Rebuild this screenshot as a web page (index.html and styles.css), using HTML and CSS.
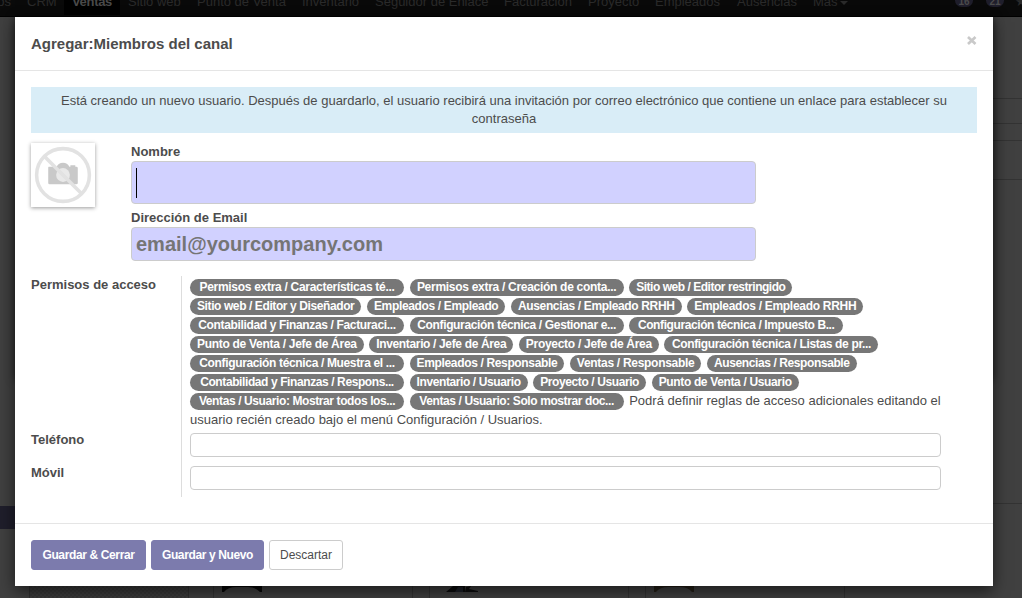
FILE: index.html
```html
<!DOCTYPE html>
<html lang="es">
<head>
<meta charset="utf-8">
<title>Agregar: Miembros del canal</title>
<link rel="stylesheet" href="styles.css">
</head>
<body>
<div class="page">
  <nav class="navbar">
    <span class="nav-item cut">Contactos</span><span class="nav-item crm">CRM</span><span class="nav-item active">Ventas</span><span class="nav-item web">Sitio web</span><span class="nav-item pos">Punto de Venta</span><span class="nav-item inv">Inventario</span><span class="nav-item seg">Seguidor de Enlace</span><span class="nav-item fac">Facturación</span><span class="nav-item pro">Proyecto</span><span class="nav-item emp">Empleados</span><span class="nav-item aus">Ausencias</span><span class="nav-item mas">Más<i class="caret"></i></span>
    <span class="badge one">16</span><span class="badge two">21</span><span class="star">★</span>
  </nav>
  <i class="side-selected"></i>
  <i class="rule r1"></i><i class="rule r2"></i><i class="rule r3"></i><i class="rule r4"></i><i class="rule r5"></i>
  <div class="kanban">
    <div class="search-panel"></div>
    <div class="card"><svg width="40" height="6" viewBox="0 0 40 6"><path d="M0 0H40V6H38Q34 1 26 1H14Q6 1 2 6H0Z" fill="#080808"/></svg></div>
    <div class="card"><svg width="40" height="6" viewBox="0 0 40 6"><path d="M8 6L15 0H27V6Z M27 6L28 1L33 0L31 3L40 5V6Z" fill="#0c0c0d"/><path d="M17 6L20 1H25V6Z" fill="#1d2028"/></svg></div>
    <div class="card"><svg width="40" height="6" viewBox="0 0 40 6"><path d="M0 0H40V6H38Q34 1 26 1H14Q6 1 2 6H0Z" fill="#252018"/></svg></div>
  </div>
</div>
<div class="shade"></div>
<section class="modal">
  <header class="modal-header">
    <h3>Agregar:Miembros del canal</h3>
    <svg class="close" width="11" height="11" viewBox="0 0 11 11"><path d="M2 2L9.500 9M9.500 2L2 9" stroke="#c9c9c9" stroke-width="2.700"/></svg>
  </header>
  <main class="modal-body">
    <p class="alert"><span class="line-a">Está creando un nuevo usuario. Después de guardarlo, el usuario recibirá una invitación por correo electrónico que contiene un enlace para establecer su</span><br><span>contraseña</span></p>
    <div class="identity">
      <div class="avatar">
        <svg width="64" height="64" viewBox="0 0 65 65">
          <path d="M18 24H26Q28 20 32.500 20Q37 20 39 24H40V22.500H45V24H46Q47.500 24 47.500 25.500V40.500Q47.500 42 46 42H19Q17.500 42 17.500 40.500V25.500Q17.500 24 18 24Z" fill="#c9c9c9"/>
          <circle cx="32.500" cy="32.500" r="7" fill="#e9e9e9"/>
          <circle cx="32.500" cy="32.500" r="26.800" fill="none" stroke="#e2e2e2" stroke-width="3.600"/>
          <path d="M13.500 13.500L51.500 51.500" stroke="#e2e2e2" stroke-width="3.600"/>
        </svg>
      </div>
      <div class="title-fields">
        <label>Nombre</label>
        <div class="big-input name"><i class="cursor"></i></div>
        <label class="second">Dirección de Email</label>
        <div class="big-input email"><span>email@yourcompany.com</span></div>
      </div>
    </div>
    <div class="group">
      <div class="labels"><label>Permisos de acceso</label><label class="tel">Teléfono</label><label class="mov">Móvil</label></div>
      <div class="fields">
        <div class="tags">
          <div class="tag-row"><span class="tag wide loose">Permisos extra / Características té...</span><span class="tag wide loose">Permisos extra / Creación de conta...</span><span class="tag tightest">Sitio web / Editor restringido</span></div>
          <div class="tag-row"><span class="tag tight">Sitio web / Editor y Diseñador</span><span class="tag">Empleados / Empleado</span><span class="tag">Ausencias / Empleado RRHH</span><span class="tag loose">Empleados / Empleado RRHH</span></div>
          <div class="tag-row"><span class="tag wide">Contabilidad y Finanzas / Facturaci...</span><span class="tag wide">Configuración técnica / Gestionar e...</span><span class="tag wide tight">Configuración técnica / Impuesto B...</span></div>
          <div class="tag-row"><span class="tag loose">Punto de Venta / Jefe de Área</span><span class="tag">Inventario / Jefe de Área</span><span class="tag loose">Proyecto / Jefe de Área</span><span class="tag wide">Configuración técnica / Listas de pr...</span></div>
          <div class="tag-row"><span class="tag wide">Configuración técnica / Muestra el ...</span><span class="tag">Empleados / Responsable</span><span class="tag loose">Ventas / Responsable</span><span class="tag tight">Ausencias / Responsable</span></div>
          <div class="tag-row"><span class="tag wide tight">Contabilidad y Finanzas / Respons...</span><span class="tag tight">Inventario / Usuario</span><span class="tag tight">Proyecto / Usuario</span><span class="tag">Punto de Venta / Usuario</span></div>
          <div class="tag-row"><span class="tag wide tight">Ventas / Usuario: Mostrar todos los...</span><span class="tag wide tight">Ventas / Usuario: Solo mostrar doc...</span><span class="note">Podrá definir reglas de acceso adicionales editando el</span></div>
          <div class="note last">usuario recién creado bajo el menú Configuración / Usuarios.</div>
        </div>
        <div class="input"></div>
        <div class="input"></div>
      </div>
    </div>
  </main>
  <footer class="modal-footer"><button class="btn primary save">Guardar &amp; Cerrar</button><button class="btn primary new">Guardar y Nuevo</button><button class="btn discard">Descartar</button></footer>
</section>
</body>
</html>
```
FILE: styles.css
```css
* { box-sizing: border-box; }
body { margin: 0; width: 1022px; height: 598px; overflow: hidden; background: #404040; color: #4c4c4c; font: 13px/18px "Liberation Sans", Arial, sans-serif; position: relative; }
.page { position: absolute; inset: 0; overflow: hidden; }
.navbar { height: 17px; background: #0a0a0a; border-bottom: 1px solid #000; color: #2b2b2b; position: relative; white-space: nowrap; }
.nav-item { position: absolute; top: -7px; }
.cut { right: 1011px; }
.crm { left: 27px; }
.active { left: 64px; width: 56px; height: 22px; background: #000; color: #4a4a4a; font-weight: bold; text-align: center; letter-spacing: -.3px; }
.web { left: 128px; }
.pos { left: 197px; }
.inv { left: 302px; }
.seg { left: 375px; }
.fac { left: 504px; }
.pro { left: 588px; }
.emp { left: 655px; }
.aus { left: 737px; }
.mas { left: 813px; }
.caret { display: inline-block; border: 4px solid transparent; border-top-color: #2b2b2b; border-bottom: 0; margin-left: 2px; vertical-align: 1px; }
.badge { position: absolute; top: -6px; height: 13px; width: 18px; border-radius: 7px; background: #1f1e2b; color: #4b4b4b; font: bold 10px/15px "Liberation Sans", sans-serif; text-align: center; }
.one { left: 955px; }
.two { left: 986px; }
.star { position: absolute; left: 1015px; top: -7px; }
.side-selected { position: absolute; left: 0; top: 506px; width: 20px; height: 23px; background: #1f1e2b; }
.rule { position: absolute; left: 980px; right: 0; height: 1px; background: #333; }
.r1 { top: 98px; }
.r2 { top: 123px; }
.r3 { top: 140px; }
.r4 { top: 179px; }
.r5 { top: 503px; }
.kanban { position: absolute; left: 29px; top: 580px; height: 18px; display: flex; }
.search-panel { width: 160px; border: solid #303030; border-width: 0 1px; margin-right: 24px; background: repeating-conic-gradient(#383838 0 25%, #3d3d3d 0 50%) 0 0 / 4px 4px; }
.card { width: 200px; margin-right: 16px; border: solid #333; border-width: 0 1px; padding: 6px 0 0 8px; line-height: 0; }
.shade { position: absolute; left: 15px; top: 17px; width: 978px; height: 363px; box-shadow: 0 0 8px rgba(0,0,0,.5); }
.modal { position: absolute; left: 15px; top: 17px; width: 978px; height: 569px; display: flex; flex-direction: column; background: #fff; box-shadow: 0 5px 15px rgba(0,0,0,.6); }
.modal-header { height: 54px; border-bottom: 1px solid #e5e5e5; padding: 0 16px; display: flex; justify-content: space-between; }
h3 { margin: 17px 0 0; font-size: 15px; line-height: 20px; }
.close { margin-top: 18px; }
.modal-body { flex: 1; padding: 16px; }
.alert { margin: 0; height: 46px; background: #d9edf7; text-align: center; padding-top: 5px; white-space: nowrap; }
label { display: block; font-weight: bold; }
.identity { display: flex; height: 143px; padding-top: 10px; }
.avatar { width: 64px; height: 64px; box-shadow: 0 1px 4px rgba(0,0,0,.4); margin-right: 36px; }
.title-fields label { height: 18px; }
.title-fields label.second { margin-top: 5px; }
.big-input { width: 625px; border: 1px solid #ccc; border-radius: 4px; background: #d1d1ff; padding-left: 4px; }
.name { height: 43px; padding-top: 6px; }
.cursor { display: block; width: 1px; height: 30px; background: #000; }
.email { height: 34px; font-size: 20px; font-weight: bold; line-height: 32px; color: #757575; }
.group { display: flex; height: 221px; }
.labels { width: 151px; border-right: 1px solid #ddd; }
.labels .tel { margin-top: 137px; }
.labels .mov { margin-top: 15px; }
.fields { width: 759px; padding: 2px 0 0 8px; }
.tags { height: 155px; }
.tag-row { display: flex; gap: 5.6px; height: 19px; white-space: nowrap; }
.tag { height: 17px; margin-top: 1px; padding: 0 7px; border-radius: 9px; background: #777; color: #fff; font-size: 12px; font-weight: bold; line-height: 16px; text-align: center; letter-spacing: -.35px; }
.wide { width: 214px; padding: 0; }
.loose { letter-spacing: -.29px; }
.tight { letter-spacing: -.4px; }
.tightest { letter-spacing: -.47px; }
.note { line-height: 17px; }
.input { height: 24px; border: 1px solid #ccc; border-radius: 4px; margin-bottom: 9px; }
.modal-footer { height: 63px; border-top: 1px solid #e5e5e5; padding: 16px; display: flex; gap: 5px; }
.btn { height: 30px; border: 1px solid #7c7bad; border-radius: 3px; padding: 0; font: 12px/18px "Liberation Sans", sans-serif; }
.primary { background: #7c7bad; color: #fff; font-weight: bold; letter-spacing: -.37px; }
.save { width: 115px; }
.new { width: 113px; }
.discard { width: 74px; background: #fff; border-color: #ccc; color: #4c4c4c; }
```
